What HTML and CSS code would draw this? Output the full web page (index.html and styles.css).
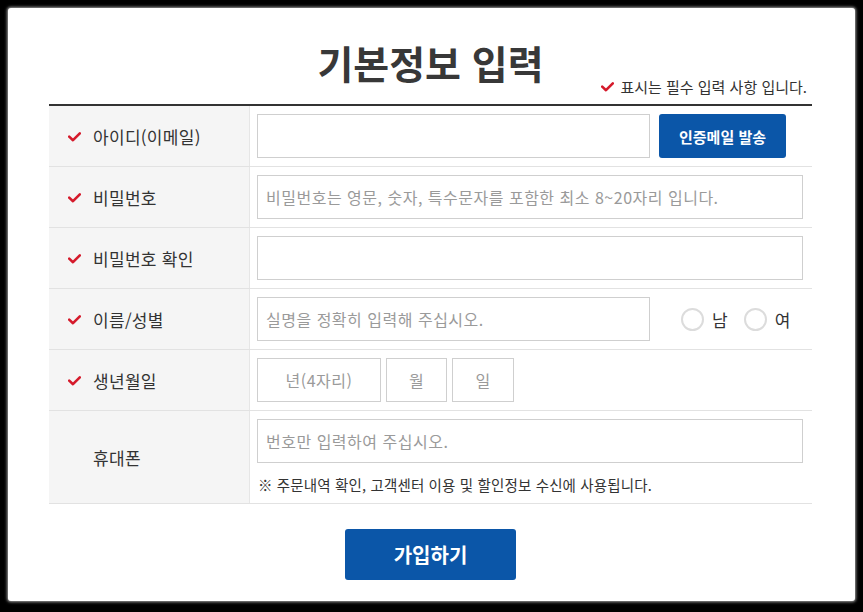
FILE: index.html
```html
<!DOCTYPE html>
<html lang="ko">
<head>
<meta charset="utf-8">
<title>기본정보 입력</title>
<link rel="stylesheet" href="styles.css">
</head>
<body>
<div class="panel">
  <div class="head">
    <h1 class="title">기본정보 입력</h1>
    <p class="req-note"><svg class="chk" viewBox="0 0 13 10" width="13" height="10"><path d="M1.2 4.6 L5 8.2 L11.8 1.4" /></svg>표시는 필수 입력 사항 입니다.</p>
  </div>
  <div class="form">
    <div class="row">
      <div class="label"><svg class="chk" viewBox="0 0 13 10" width="13" height="10"><path d="M1.2 4.6 L5 8.2 L11.8 1.4" /></svg><span>아이디(이메일)</span></div>
      <div class="field">
        <input class="inp w393" type="text">
        <button class="btn-mail" type="button">인증메일 발송</button>
      </div>
    </div>
    <div class="row">
      <div class="label"><svg class="chk" viewBox="0 0 13 10" width="13" height="10"><path d="M1.2 4.6 L5 8.2 L11.8 1.4" /></svg><span>비밀번호</span></div>
      <div class="field">
        <input class="inp wfull" type="password" placeholder="비밀번호는 영문, 숫자, 특수문자를 포함한 최소 8~20자리 입니다.">
      </div>
    </div>
    <div class="row">
      <div class="label"><svg class="chk" viewBox="0 0 13 10" width="13" height="10"><path d="M1.2 4.6 L5 8.2 L11.8 1.4" /></svg><span>비밀번호 확인</span></div>
      <div class="field">
        <input class="inp wfull" type="password">
      </div>
    </div>
    <div class="row">
      <div class="label"><svg class="chk" viewBox="0 0 13 10" width="13" height="10"><path d="M1.2 4.6 L5 8.2 L11.8 1.4" /></svg><span>이름/성별</span></div>
      <div class="field">
        <input class="inp w393" type="text" placeholder="실명을 정확히 입력해 주십시오.">
        <div class="gender">
          <label class="radio"><input type="radio" name="g"><span>남</span></label>
          <label class="radio"><input type="radio" name="g"><span>여</span></label>
        </div>
      </div>
    </div>
    <div class="row">
      <div class="label"><svg class="chk" viewBox="0 0 13 10" width="13" height="10"><path d="M1.2 4.6 L5 8.2 L11.8 1.4" /></svg><span>생년월일</span></div>
      <div class="field birth">
        <input class="inp center w124" type="text" placeholder="년(4자리)">
        <input class="inp center w61" type="text" placeholder="월">
        <input class="inp center w62" type="text" placeholder="일">
      </div>
    </div>
    <div class="row tall">
      <div class="label"><span class="noicon">휴대폰</span></div>
      <div class="field col">
        <input class="inp wfull" type="text" placeholder="번호만 입력하여 주십시오.">
        <p class="help">※ 주문내역 확인, 고객센터 이용 및 할인정보 수신에 사용됩니다.</p>
      </div>
    </div>
  </div>
  <div class="actions">
    <button class="btn-submit" type="button">가입하기</button>
  </div>
</div>
</body>
</html>
```
FILE: styles.css
```css
* { box-sizing: border-box; }
html, body { margin: 0; padding: 0; }
body {
  background: #000;
  padding: 8px;
  font-family: "Noto Sans CJK KR", "Noto Sans", sans-serif;
  color: #333;
}
.panel {
  width: 847px;
  height: 593px;
  background: #fff;
  border-radius: 3px;
  box-shadow: 0 0 3px 1px rgba(200,200,200,0.8);
  padding: 0 43px 0 41px;
}
.head {
  display: flex;
  flex-direction: column;
}
.title {
  margin: 34px 0 0;
  font-size: 39px;
  line-height: 40px;
  font-weight: 700;
  text-align: center;
  color: #383838;
}
.req-note {
  margin: -4px 5px 8px 0;
  align-self: flex-end;
  font-size: 15px;
  line-height: 18px;
  color: #333;
  display: flex;
  align-items: center;
}
.req-note .chk { margin-right: 6px; }
.chk path {
  fill: none;
  stroke: #d51a2b;
  stroke-width: 2.6;
  stroke-linecap: round;
  stroke-linejoin: round;
}
.form {
  border-top: 2px solid #333;
}
.row {
  display: flex;
  border-bottom: 1px solid #e2e2e2;
  height: 61px;
}
.row.tall { height: 93px; }
.label {
  width: 201px;
  flex: none;
  background: #f5f5f5;
  border-right: 1px solid #e6e6e6;
  display: flex;
  align-items: center;
  padding-left: 19px;
  font-size: 17px;
  color: #333;
  letter-spacing: 0.3px;
}
.label .chk { margin-right: 12px; margin-top: 1px; }
.label .noicon { margin-left: 25px; }
.field {
  flex: 1;
  display: flex;
  align-items: flex-start;
  padding: 8px 9px 8px 7px;
  gap: 9px;
}
.field.col { flex-direction: column; gap: 0; }
.inp {
  height: 44px;
  border: 1px solid #cfcfcf;
  background: #fff;
  padding: 0 8px;
  font-family: inherit;
  font-size: 16px;
  color: #333;
  outline: none;
  letter-spacing: 0.5px;
}
.inp::placeholder { color: #9a9a9a; }
.w393 { width: 393px; }
.wfull { width: 546px; }
.w124 { width: 124px; }
.w61 { width: 61px; }
.w62 { width: 62px; }
.center { text-align: center; padding: 0; }
.birth { gap: 5px; }
.btn-mail {
  width: 127px;
  height: 44px;
  border: none;
  border-radius: 3px;
  background: #0b56a8;
  color: #fff;
  font-family: inherit;
  font-size: 15px;
  font-weight: 700;
}
.gender {
  display: flex;
  align-items: center;
  height: 44px;
  margin-left: 22px;
  gap: 16px;
}
.radio {
  display: flex;
  align-items: center;
  gap: 8px;
  font-size: 17px;
  color: #333;
}
.radio input {
  appearance: none;
  -webkit-appearance: none;
  margin: 0;
  width: 23px;
  height: 23px;
  border: 2px solid #dcdcdc;
  border-radius: 50%;
  background: #fff;
}
.help {
  margin: 12px 0 0 1px;
  font-size: 14.5px;
  line-height: 20px;
  color: #333;
  letter-spacing: 0.15px;
}
.actions {
  display: flex;
  justify-content: center;
  padding-top: 25px;
}
.btn-submit {
  width: 171px;
  height: 51px;
  border: none;
  border-radius: 3px;
  background: #0b56a8;
  color: #fff;
  font-family: inherit;
  font-size: 20px;
  font-weight: 700;
}
```
